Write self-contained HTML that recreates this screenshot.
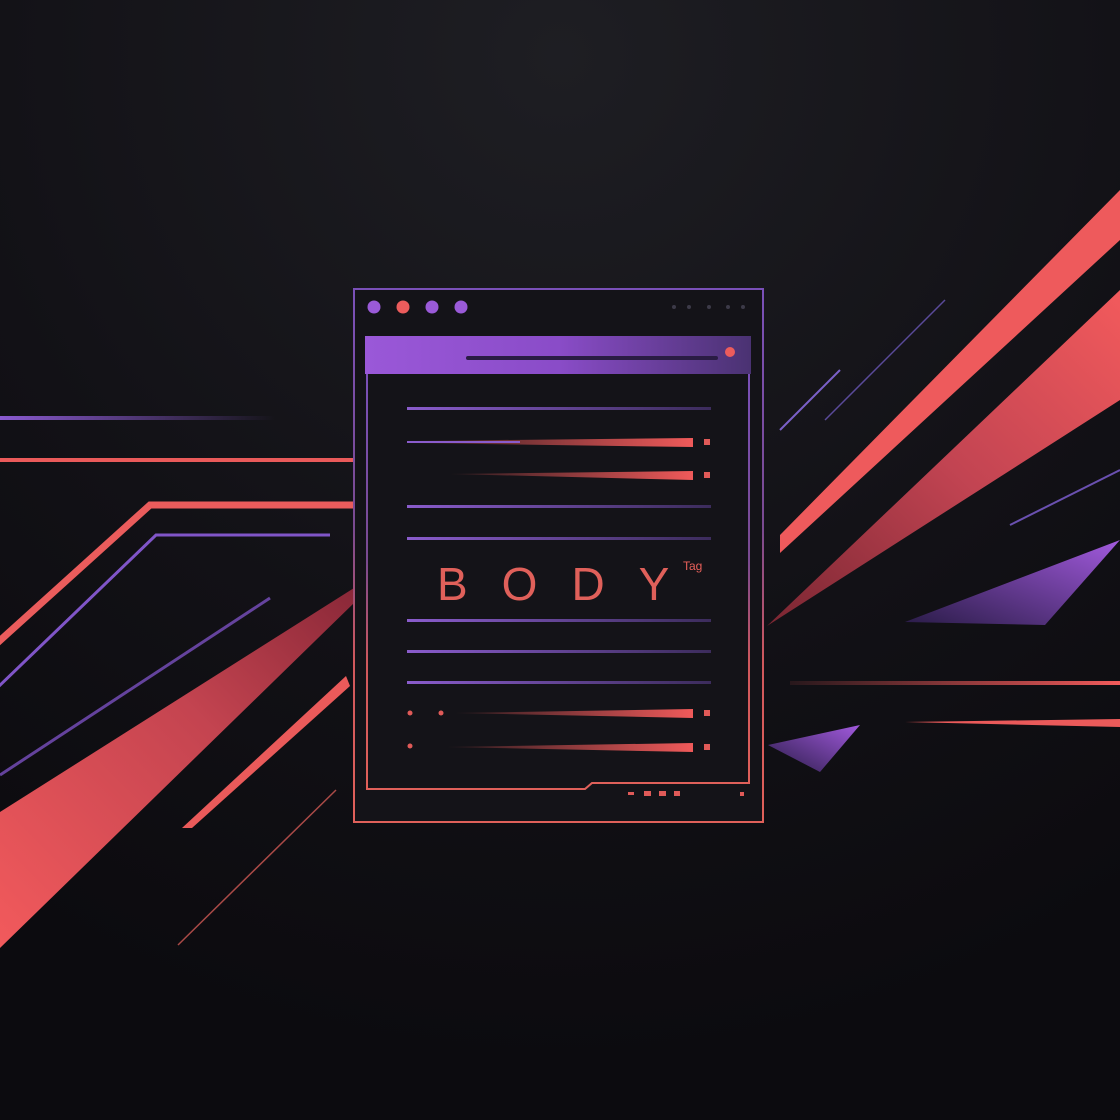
<!DOCTYPE html>
<html><head><meta charset="utf-8"><style>
html,body{margin:0;padding:0;width:1120px;height:1120px;overflow:hidden;background:#0e0d11}
svg{display:block}
</style></head><body>
<svg width="1120" height="1120" viewBox="0 0 1120 1120" xmlns="http://www.w3.org/2000/svg">
<defs>
<radialGradient id="bg" cx="0.5" cy="0.05" r="0.9">
<stop offset="0" stop-color="#1e1e23"/><stop offset="0.6" stop-color="#121116"/><stop offset="1" stop-color="#0c0b0f"/>
</radialGradient>
<linearGradient id="frame" x1="0" y1="0" x2="0" y2="1">
<stop offset="0" stop-color="#7a50b8"/><stop offset="0.45" stop-color="#7a4a90"/><stop offset="0.7" stop-color="#d0585c"/><stop offset="1" stop-color="#e0605a"/>
</linearGradient>
<linearGradient id="hdr" x1="0" y1="0" x2="1" y2="0">
<stop offset="0" stop-color="#9a58d8"/><stop offset="0.5" stop-color="#8a4cc8"/><stop offset="1" stop-color="#4a3272"/>
</linearGradient>
<linearGradient id="pl" x1="0" y1="0" x2="1" y2="0">
<stop offset="0" stop-color="#8a5ccc"/><stop offset="1" stop-color="#3c2c5c"/>
</linearGradient>
<linearGradient id="fadeP" x1="0" y1="0" x2="1" y2="0">
<stop offset="0" stop-color="#8a5ad0"/><stop offset="1" stop-color="#8a5ad0" stop-opacity="0"/>
</linearGradient>
<linearGradient id="fadeR" x1="1" y1="0" x2="0" y2="0">
<stop offset="0" stop-color="#f05a5a"/><stop offset="1" stop-color="#f05a5a" stop-opacity="0.1"/>
</linearGradient>
<linearGradient id="wedgeR" x1="0" y1="1" x2="1" y2="0">
<stop offset="0" stop-color="#f25a5c"/><stop offset="0.6" stop-color="#c44450"/><stop offset="1" stop-color="#8a2838"/>
</linearGradient>
<linearGradient id="wedgeRR" x1="0" y1="1" x2="1" y2="0">
<stop offset="0" stop-color="#7a2632"/><stop offset="0.5" stop-color="#c24452"/><stop offset="1" stop-color="#f25a5c"/>
</linearGradient>
<linearGradient id="purT" x1="0" y1="1" x2="1" y2="0">
<stop offset="0" stop-color="#2a1c48"/><stop offset="1" stop-color="#a25ade"/>
</linearGradient>
</defs>
<rect width="1120" height="1120" fill="url(#bg)"/>

<rect x="0" y="416" width="275" height="4" fill="url(#fadeP)"/>
<rect x="0" y="458" width="354" height="4" fill="#ea5a5a"/>
<polyline points="354,505 150,505 -5,645" fill="none" stroke="#ea5c5c" stroke-width="7"/>
<polyline points="330,535 156,535 -5,690" fill="none" stroke="#8055c8" stroke-width="3"/>
<line x1="0" y1="775" x2="270" y2="598" stroke="#7a50c0" stroke-width="3" opacity="0.8"/>
<polygon points="0,812 354,588 354,603 0,948" fill="url(#wedgeR)"/>
<polygon points="182,828 346,676 350,686 192,828" fill="#ea5a5a"/>
<line x1="178" y1="945" x2="336" y2="790" stroke="#d25a55" stroke-width="1.5" opacity="0.8"/>

<polygon points="780,535 1120,190 1120,240 780,553" fill="#ee5a5c"/>
<polygon points="767,626 1120,290 1120,400" fill="url(#wedgeRR)"/>
<line x1="780" y1="430" x2="840" y2="370" stroke="#7a60c8" stroke-width="2"/>
<line x1="825" y1="420" x2="945" y2="300" stroke="#5a4a9a" stroke-width="1.5"/>
<line x1="1010" y1="525" x2="1120" y2="470" stroke="#6a50b0" stroke-width="2"/>
<polygon points="905,622 1120,540 1045,625" fill="url(#purT)"/>
<rect x="790" y="681" width="330" height="4" fill="url(#fadeR)"/>
<polygon points="905,722 1120,719 1120,727" fill="#ea5a5a"/>
<polygon points="768,745 860,725 820,772" fill="url(#purT)"/>

<rect x="354" y="289" width="409" height="533" fill="#141318" stroke="url(#frame)" stroke-width="2"/>
<circle cx="374" cy="307" r="6.5" fill="#9a5ad8"/>
<circle cx="403" cy="307" r="6.5" fill="#ec5c5c"/>
<circle cx="432" cy="307" r="6.5" fill="#9a5ad8"/>
<circle cx="461" cy="307" r="6.5" fill="#9a5ad8"/>
<g fill="#3c3a48"><circle cx="674" cy="307" r="2"/><circle cx="689" cy="307" r="2"/><circle cx="709" cy="307" r="2"/><circle cx="728" cy="307" r="2"/><circle cx="743" cy="307" r="2"/></g>
<rect x="365" y="336" width="386" height="38" fill="url(#hdr)"/>
<rect x="466" y="356" width="252" height="4" rx="2" fill="#2a1c44"/>
<circle cx="730" cy="352" r="5" fill="#ec5c5c"/>
<path d="M367,374 V789 H585 L592,783 H749 V374" fill="#141318" stroke="url(#frame)" stroke-width="2"/>

<g fill="url(#pl)">
<rect x="407" y="407" width="304" height="3"/>
<rect x="407" y="505" width="304" height="3"/>
<rect x="407" y="537" width="304" height="3"/>
<rect x="407" y="619" width="304" height="3"/>
<rect x="407" y="650" width="304" height="3"/>
<rect x="407" y="681" width="304" height="3"/>
</g>
<polygon points="407,441 693,438 693,447 407,443" fill="url(#fadeR)"/>
<polygon points="407,441 520,441 520,443 407,443" fill="#8a5ccc"/>
<polygon points="450,474 693,471 693,480" fill="url(#fadeR)"/>
<polygon points="455,713 693,709 693,718" fill="url(#fadeR)"/>
<polygon points="447,747 693,743 693,752" fill="url(#fadeR)"/>
<g fill="#e05a58">
<rect x="704" y="439" width="6" height="6"/>
<rect x="704" y="472" width="6" height="6"/>
<rect x="704" y="710" width="6" height="6"/>
<rect x="704" y="744" width="6" height="6"/>
<circle cx="410" cy="713" r="2.5"/><circle cx="441" cy="713" r="2.5"/><circle cx="410" cy="746" r="2.5"/>
<rect x="628" y="792" width="6" height="3"/><rect x="644" y="791" width="7" height="5"/><rect x="659" y="791" width="7" height="5"/><rect x="674" y="791" width="6" height="5"/><rect x="740" y="792" width="4" height="4"/>
</g>
<text x="437" y="600" font-family="'Liberation Sans',sans-serif" font-size="46" fill="#e0605a" letter-spacing="34">BODY</text>
<text x="683" y="570" font-family="'Liberation Sans',sans-serif" font-size="12" fill="#e8605a">Tag</text>
</svg>
</body></html>
